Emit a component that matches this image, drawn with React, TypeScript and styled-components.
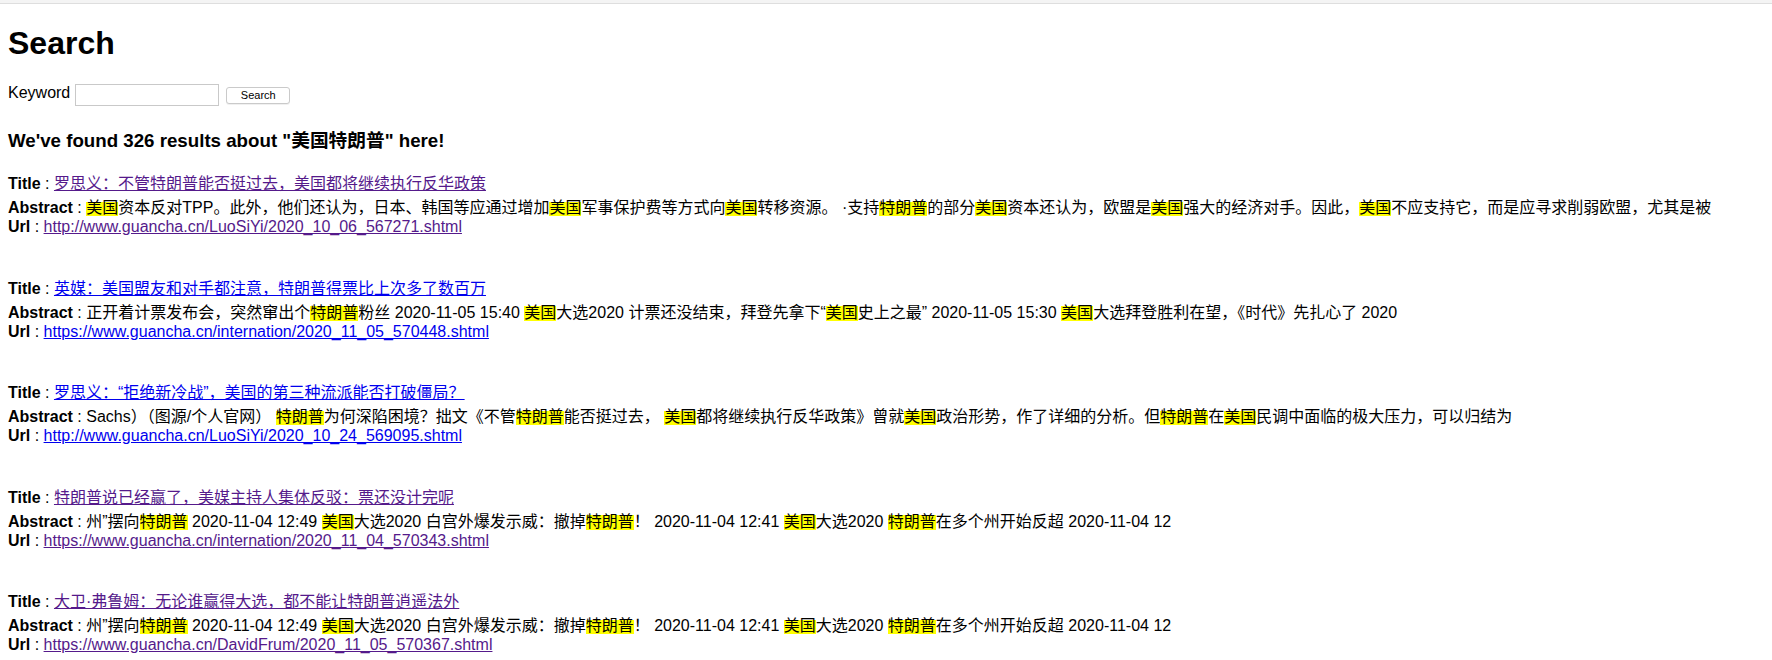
import React from "react";
import styled, { createGlobalStyle } from "styled-components";

const GlobalStyle = createGlobalStyle`
  html, body {
    margin: 0;
    padding: 0;
    background: #ffffff;
  }
  body {
    font-family: "Liberation Sans", Arial, "Noto Sans CJK SC", sans-serif;
    font-size: 16px;
    color: #000000;
  }
`;

const TopBar = styled.div`
  height: 3px;
  background: #f4f4f4;
  border-bottom: 1px solid #dedede;
`;

const Page = styled.main`
  padding: 0 8px;
`;

const PageTitle = styled.h1`
  font-size: 32px;
  font-weight: bold;
  margin: 21.44px 0;
`;

const SearchForm = styled.form`
  display: flex;
  align-items: center;
  margin: 0;
`;

const FieldLabel = styled.label`
  font-size: 16px;
  margin-bottom: 3px;
`;

const KeywordInput = styled.input`
  box-sizing: border-box;
  width: 144px;
  height: 22px;
  margin: 0 0 0 5px;
  padding: 1px 3px;
  border: 1px solid #c9c9c9;
  border-radius: 0;
  background: #ffffff;
  font-family: "Liberation Sans", Arial, sans-serif;
  font-size: 13px;
  outline: none;
`;

const SearchButton = styled.button`
  box-sizing: border-box;
  width: 64px;
  height: 17px;
  margin: 1px 0 0 7px;
  padding: 0;
  border: 1px solid #cacaca;
  border-radius: 3px;
  background: #ffffff;
  box-shadow: 0 1px 0 rgba(0, 0, 0, 0.06);
  font-family: "Liberation Sans", Arial, sans-serif;
  font-size: 11px;
  line-height: 15px;
  color: #000000;
`;

const Summary = styled.h3`
  font-size: 18.72px;
  font-weight: bold;
  margin: 18.72px 0;
`;

const ResultList = styled.section``;

const ResultItem = styled.article`
  margin-bottom: 38.5px;
`;

const FieldRow = styled.div`
  white-space: nowrap;
`;

const FieldName = styled.b`
  font-weight: bold;
`;

const ResultLink = styled.a<{ $visited?: boolean }>`
  color: ${(p) => (p.$visited ? "#551a8b" : "#0000ee")};
  text-decoration: underline;
`;

const Mark = styled.span`
  background-image: linear-gradient(#ffff00, #ffff00);
  background-repeat: no-repeat;
  background-size: 100% 16px;
  background-position: 0 2.2px;
`;

type Result = {
  title: string;
  abstract: string;
  url: string;
  visited: boolean;
};

const results: Result[] = [
  {
    title: "罗思义：不管特朗普能否挺过去，美国都将继续执行反华政策",
    abstract:
      "[美国]资本反对TPP。此外，他们还认为，日本、韩国等应通过增加[美国]军事保护费等方式向[美国]转移资源。 ·支持[特朗普]的部分[美国]资本还认为，欧盟是[美国]强大的经济对手。因此，[美国]不应支持它，而是应寻求削弱欧盟，尤其是被",
    url: "http://www.guancha.cn/LuoSiYi/2020_10_06_567271.shtml",
    visited: true,
  },
  {
    title: "英媒：美国盟友和对手都注意，特朗普得票比上次多了数百万",
    abstract:
      "正开着计票发布会，突然窜出个[特朗普]粉丝 2020-11-05 15:40 [美国]大选2020 计票还没结束，拜登先拿下“[美国]史上之最” 2020-11-05 15:30 [美国]大选拜登胜利在望，《时代》先扎心了 2020",
    url: "https://www.guancha.cn/internation/2020_11_05_570448.shtml",
    visited: false,
  },
  {
    title: "罗思义：“拒绝新冷战”，美国的第三种流派能否打破僵局？ ",
    abstract:
      "Sachs）（图源/个人官网） [特朗普]为何深陷困境？拙文《不管[特朗普]能否挺过去， [美国]都将继续执行反华政策》曾就[美国]政治形势，作了详细的分析。但[特朗普]在[美国]民调中面临的极大压力，可以归结为",
    url: "http://www.guancha.cn/LuoSiYi/2020_10_24_569095.shtml",
    visited: false,
  },
  {
    title: "特朗普说已经赢了，美媒主持人集体反驳：票还没计完呢",
    abstract:
      "州”摆向[特朗普] 2020-11-04 12:49 [美国]大选2020 白宫外爆发示威：撤掉[特朗普]！ 2020-11-04 12:41 [美国]大选2020 [特朗普]在多个州开始反超 2020-11-04 12",
    url: "https://www.guancha.cn/internation/2020_11_04_570343.shtml",
    visited: true,
  },
  {
    title: "大卫·弗鲁姆：无论谁赢得大选，都不能让特朗普逍遥法外",
    abstract:
      "州”摆向[特朗普] 2020-11-04 12:49 [美国]大选2020 白宫外爆发示威：撤掉[特朗普]！ 2020-11-04 12:41 [美国]大选2020 [特朗普]在多个州开始反超 2020-11-04 12",
    url: "https://www.guancha.cn/DavidFrum/2020_11_05_570367.shtml",
    visited: true,
  },
];

function renderAbstract(text: string) {
  const parts = text.split(/(\[[^\]]+\])/g);
  return parts.map((part, i) =>
    part.startsWith("[") && part.endsWith("]") ? (
      <Mark key={i}>{part.slice(1, -1)}</Mark>
    ) : (
      <React.Fragment key={i}>{part}</React.Fragment>
    )
  );
}

export default function App() {
  return (
    <>
      <GlobalStyle />
      <TopBar />
      <Page>
        <PageTitle>Search</PageTitle>
        <SearchForm onSubmit={(e) => e.preventDefault()}>
          <FieldLabel htmlFor="kw">Keyword</FieldLabel>
          <KeywordInput id="kw" type="text" />
          <SearchButton type="submit">Search</SearchButton>
        </SearchForm>
        <Summary>We've found 326 results about "美国特朗普" here!</Summary>
        <ResultList>
          {results.map((r, i) => (
            <ResultItem key={i}>
              <FieldRow>
                <FieldName>Title</FieldName> :{" "}
                <ResultLink href="#" $visited={r.visited}>
                  {r.title}
                </ResultLink>
              </FieldRow>
              <FieldRow>
                <FieldName>Abstract</FieldName> : {renderAbstract(r.abstract)}
              </FieldRow>
              <FieldRow>
                <FieldName>Url</FieldName> :{" "}
                <ResultLink href="#" $visited={r.visited}>
                  {r.url}
                </ResultLink>
              </FieldRow>
            </ResultItem>
          ))}
        </ResultList>
      </Page>
    </>
  );
}
